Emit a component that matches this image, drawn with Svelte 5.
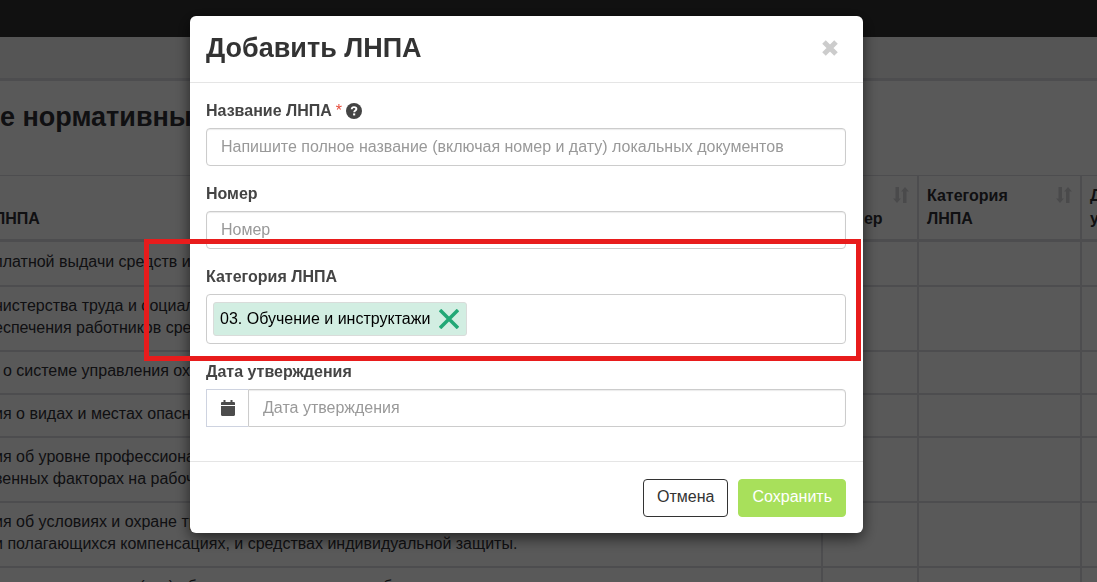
<script>
  const columns = [
    { lines: ['ЛНПА'], cls: 'name' },
    { lines: ['Номер'], cls: 'number' },
    { lines: ['Категория', 'ЛНПА'], cls: 'category' },
    { lines: ['Дата', 'утверждения'], cls: 'date' },
  ]

  const rows = [
    ['платной выдачи средств индивидуальной защиты'],
    ['нистерства труда и социальной защиты', 'еспечения работников средствами индивидуальной защиты'],
    ['\u00a0\u00a0о системе управления охраной труда'],
    ['ия о видах и местах опасных работ'],
    ['ия об уровне профессионального риска', 'венных факторах на рабочих местах'],
    ['ия об условиях и охране труда на рабочем месте,', 'и полагающихся компенсациях, и средствах индивидуальной защиты.'],
    ['чения инструктажа (сиз) об условиях труда и для рабочих мест'],
  ]

  let name = $state('')
  let number = $state('')
  let date = $state('')
  let categories = $state(['03. Обучение и инструктажи'])

  function removeCategory(category) {
    categories = categories.filter((c) => c !== category)
  }
</script>

<div class="page">
  <header class="topbar"></header>
  <div class="subbar"></div>
  <h1>е нормативные акты</h1>

  <table>
    <thead>
      <tr>
        {#each columns as col}
          <th class={col.cls}>
            <div class="th-inner">
              <span>{#each col.lines as line}<span class="line">{line}</span>{/each}</span>
              {#if col.cls !== 'name'}
                <svg class="sort" viewBox="0 0 16 16" width="16" height="16" aria-hidden="true">
                  <path d="M2.500 0h3.500v11.500H8L4 16 0 11.500h2.500zM10 16h3.500V4.500H16L12 0 8 4.500h2z" />
                </svg>
              {/if}
            </div>
          </th>
        {/each}
      </tr>
    </thead>
    <tbody>
      {#each rows as lines}
        <tr>
          <td class="name">{#each lines as line}<span class="line">{line}</span>{/each}</td>
          <td></td>
          <td></td>
          <td></td>
        </tr>
      {/each}
    </tbody>
  </table>
</div>

<div class="backdrop">
  <div class="modal" role="dialog" aria-modal="true" aria-labelledby="modal-title">
    <div class="modal-header">
      <h2 id="modal-title">Добавить ЛНПА</h2>
      <button type="button" class="close" aria-label="Закрыть">
        <svg viewBox="0 0 16 16" width="16" height="16">
          <path d="M2 2l12 12M14 2L2 14" fill="none" stroke="currentColor" stroke-width="5" />
        </svg>
      </button>
    </div>

    <form class="modal-body" id="lnpa-form">
      <div class="group">
        <label for="name">
          Название ЛНПА <span class="required">*</span>
          <svg class="help" viewBox="0 0 16 16" width="16" height="16" aria-hidden="true">
            <circle cx="8" cy="8" r="8" fill="#444" />
            <path d="M5.700 6.200C5.800 4.700 6.700 4.100 8 4.100s2.400.7 2.400 1.900C10.400 7.500 8.200 7.500 8.200 9.300" fill="none" stroke="#fff" stroke-width="1.900" />
            <path d="M7.100 10.400h2.100v2H7.100z" fill="#fff" />
          </svg>
        </label>
        <input id="name" type="text" class="control" bind:value={name} placeholder="Напишите полное название (включая номер и дату) локальных документов" />
      </div>

      <div class="group">
        <label for="number">Номер</label>
        <input id="number" type="text" class="control" bind:value={number} placeholder="Номер" />
      </div>

      <div class="group">
        <label for="category">Категория ЛНПА</label>
        <div class="tags">
          {#each categories as category}
            <span class="tag">
              {category}
              <button type="button" aria-label="Удалить" onclick={() => removeCategory(category)}>
                <svg viewBox="0 0 20 20" width="20" height="20">
                  <path d="M1 1l18 18M19 1L1 19" fill="none" stroke="#22a876" stroke-width="3.500" />
                </svg>
              </button>
            </span>
          {/each}
          <input id="category" type="text" />
        </div>
      </div>

      <div class="group">
        <label for="date">Дата утверждения</label>
        <div class="input-group">
          <span class="addon">
            <svg viewBox="0 0 14 16" width="14" height="16" aria-hidden="true">
              <path d="M0 5V3.200C0 2.500.5 2 1.200 2H2.500V0h2v2h5V0h2v2h1.300c.7 0 1.200.5 1.200 1.200V5zM0 6h14v8.800c0 .7-.5 1.200-1.200 1.200H1.200C.5 16 0 15.500 0 14.800z" fill="#4c4c4c" />
            </svg>
          </span>
          <input id="date" type="text" class="control" bind:value={date} placeholder="Дата утверждения" />
        </div>
      </div>
    </form>

    <div class="modal-footer">
      <button type="button" class="btn cancel">Отмена</button>
      <button type="submit" form="lnpa-form" class="btn save">Сохранить</button>
    </div>

    <div class="highlight"></div>
  </div>
</div>

<style>
  :global(body) {
    margin: 0;
    overflow: hidden;
    background: #fff;
  }
  .page,
  .backdrop {
    font-family: 'Liberation Sans', Arial, sans-serif;
    font-size: 16px;
    line-height: 22px;
  }
  .page {
    height: 100vh;
    overflow: hidden;
    color: #303036;
  }
  .topbar {
    height: 37px;
    background: #313131;
  }
  .subbar {
    height: 41px;
    background: #f4f4f4;
    border-bottom: 3px solid #dcdce2;
  }
  h1 {
    margin: 20px 0 41px;
    font-size: 27px;
    line-height: 33px;
    white-space: nowrap;
  }

  table {
    width: calc(100% + 65px);
    margin-left: -6px;
    table-layout: fixed;
    border-spacing: 0;
    border-top: 1px solid #dcdce2;
  }
  th {
    padding: 8px 8px 9px;
    line-height: 23px;
    text-align: left;
    vertical-align: bottom;
    border-bottom: 3px solid #dcdce2;
  }
  .number {
    width: 78px;
  }
  .category {
    width: 145px;
  }
  .date {
    width: 58px;
  }
  .th-inner {
    display: flex;
    justify-content: space-between;
  }
  .number .th-inner {
    align-items: flex-end;
  }
  .number .sort {
    align-self: flex-start;
    margin-top: -20px;
  }
  .sort {
    flex: none;
    margin-top: 3px;
    fill: #d4d4d8;
  }
  td {
    padding: 8px 8px 11px;
    border-bottom: 2px solid #dcdce2;
  }
  tbody tr:first-child td {
    padding: 9px 8px 12px;
  }
  th + th,
  td + td {
    border-left: 2px solid #dcdce2;
  }
  th.name,
  tbody td.name,
  tbody tr:first-child td.name {
    padding-left: 0;
  }
  .line {
    display: block;
    white-space: nowrap;
  }

  .backdrop {
    position: fixed;
    inset: 0;
    display: flex;
    justify-content: center;
    align-items: flex-start;
    padding: 16px 44px 16px 0;
    background: rgba(0, 0, 0, 0.65);
  }
  .modal {
    position: relative;
    width: 100%;
    max-width: 673px;
    color: #444;
    background: #fff;
    border-radius: 6px;
    box-shadow: 0 5px 15px rgba(0, 0, 0, 0.6);
  }
  .modal-header {
    display: flex;
    justify-content: space-between;
    align-items: flex-start;
    padding: 16px 25px 17px 16px;
    border-bottom: 1px solid #e5e5e5;
  }
  h2 {
    margin: 0;
    font-size: 27px;
    line-height: 33px;
    color: #333;
  }
  button {
    font: inherit;
    cursor: pointer;
  }
  .close,
  .tag button {
    display: flex;
    padding: 0;
    color: #ccc;
    background: none;
    border: 0;
  }
  .close {
    margin-top: 8px;
  }
  .modal-body {
    display: flex;
    flex-direction: column;
    gap: 16px;
    padding: 16px 17px 34px 16px;
  }
  label {
    display: flex;
    align-items: center;
    gap: 4px;
    margin-bottom: 6px;
    line-height: 23px;
    font-weight: bold;
  }
  .required {
    font-weight: normal;
    color: #e74c3c;
  }
  input {
    box-sizing: border-box;
    min-width: 0;
    font: inherit;
    color: #444;
    outline: 0;
  }
  .control {
    width: 100%;
    height: 38px;
    padding: 0 14px;
    background: #fff;
    border: 1px solid #ccc;
    border-radius: 4px;
    box-shadow: inset 0 1px 1px rgba(0, 0, 0, 0.08);
  }
  .control::placeholder {
    color: #999;
  }
  .tags {
    display: flex;
    align-items: center;
    gap: 6px;
    padding: 7px 6px;
    border: 1px solid #ccc;
    border-radius: 4px;
  }
  .tags input {
    flex: 1;
    padding: 0;
    background: none;
    border: 0;
  }
  .tag {
    display: flex;
    align-items: center;
    gap: 9px;
    padding: 5px 7px 5px 6px;
    color: #000;
    background: #d2eee2;
    border: 1px solid #d9dcda;
    border-radius: 3px;
  }
  .input-group {
    display: flex;
  }
  .addon {
    display: flex;
    flex: none;
    align-items: center;
    justify-content: center;
    width: 41px;
    border: 1px solid #ced3e0;
    border-right: 0;
  }
  .input-group .control {
    border-radius: 0 4px 4px 0;
  }
  .modal-footer {
    display: flex;
    justify-content: flex-end;
    gap: 10px;
    padding: 17px 17px 16px 16px;
    border-top: 1px solid #e5e5e5;
  }
  .btn {
    height: 38px;
    padding: 0 13px 2px;
    border: 1px solid #333;
    border-radius: 4px;
  }
  .cancel {
    color: #333;
    background: #fff;
  }
  .save {
    color: #fff;
    background: #a8e05b;
    border-color: #a8e05b;
  }
  .highlight {
    position: absolute;
    top: 223px;
    left: -46px;
    right: 2px;
    height: 112px;
    border: 5px solid #e81c1c;
    pointer-events: none;
  }
</style>
